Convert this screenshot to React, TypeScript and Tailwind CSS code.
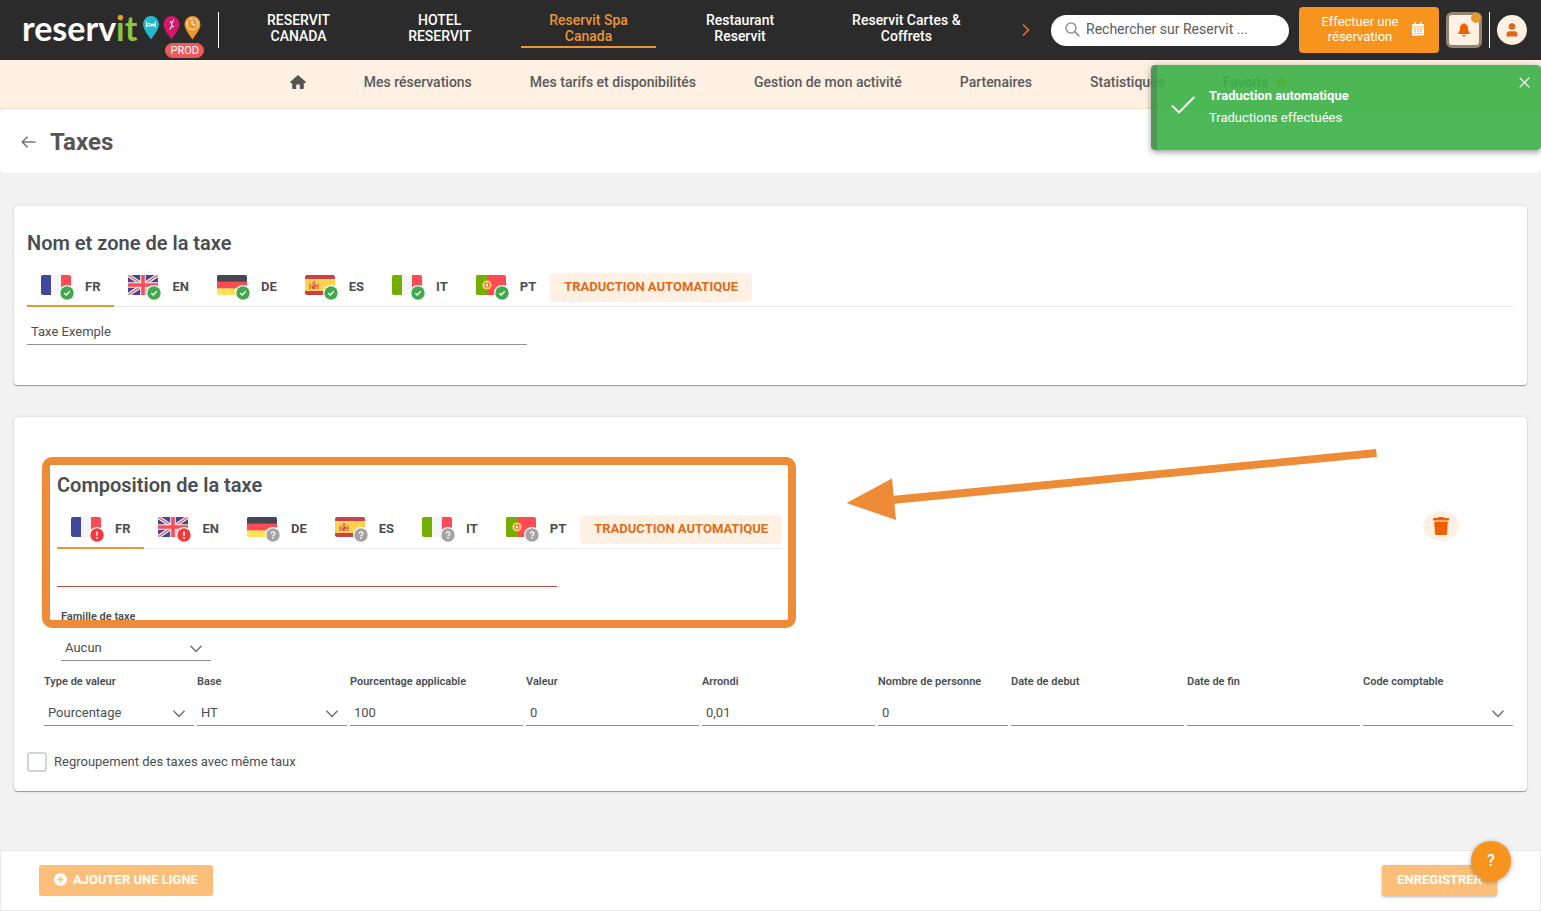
import React, { useState } from "react";

type Status = "ok" | "error" | "unknown";
type Lang = "FR" | "EN" | "DE" | "ES" | "IT" | "PT";

const LANGS: Lang[] = ["FR", "EN", "DE", "ES", "IT", "PT"];

function Flag({ code, id }: { code: Lang; id: string }) {
  const clip = `flag-${id}-${code}`;
  return (
    <svg width="30" height="20" viewBox="0 0 30 20" aria-hidden="true" className="block">
      <clipPath id={clip}>
        <rect width="30" height="20" rx="2" />
      </clipPath>
      <g clipPath={`url(#${clip})`}>
        {code === "FR" && (
          <>
            <rect width="30" height="20" fill="#f5f5f5" />
            <rect width="10" height="20" fill="#41479b" />
            <rect x="20" width="10" height="20" fill="#ff4b55" />
          </>
        )}
        {code === "EN" && (
          <>
            <rect width="30" height="20" fill="#41479b" />
            <path d="M0 0L30 20M30 0L0 20" stroke="#f5f5f5" strokeWidth="3.6" />
            <path d="M0 0L15 10M30 20L15 10M30 0L15 10M0 20L15 10" stroke="#ff4b55" strokeWidth="1.3" />
            <path d="M15 0V20M0 10H30" stroke="#f5f5f5" strokeWidth="5.6" />
            <path d="M15 0V20M0 10H30" stroke="#ff4b55" strokeWidth="3.6" />
          </>
        )}
        {code === "DE" && (
          <>
            <rect width="30" height="20" fill="#ffe15a" />
            <rect width="30" height="13.3" fill="#ff4b55" />
            <rect width="30" height="6.6" fill="#464655" />
          </>
        )}
        {code === "ES" && (
          <>
            <rect width="30" height="20" fill="#c8414b" />
            <rect y="4" width="30" height="12" fill="#ffd250" />
            <path d="M5 8V13.5M13 8V13.5" stroke="#d0605a" strokeWidth="0.9" />
            <path d="M6.6 9.4h4.8v2.8a2.4 1.8 0 0 1-4.8 0z" fill="#c8414b" />
            <path d="M7.2 10.2h1.4v1.2H7.2zM9.4 11.8h1.4v1H9.4z" fill="#ffd250" />
            <path d="M7.2 8.6L7.6 7L9 6.200L10.400 7L10.800 8.600z" fill="#d06a4a" />
            <path d="M4 11.200h1.800M12.200 11.200h1.800M4.200 13.800h1.400M12.400 13.800h1.400" stroke="#c8414b" strokeWidth="0.8" />
          </>
        )}
        {code === "IT" && (
          <>
            <rect width="30" height="20" fill="#f5f5f5" />
            <rect width="10" height="20" fill="#73af00" />
            <rect x="20" width="10" height="20" fill="#ff4b55" />
          </>
        )}
        {code === "PT" && (
          <>
            <rect width="30" height="20" fill="#ff4b55" />
            <rect width="11" height="20" fill="#73af00" />
            <circle cx="11" cy="10" r="4.6" fill="#ffe15a" />
            <circle cx="11" cy="10" r="3.4" fill="none" stroke="#e9b04a" strokeWidth="0.7" />
            <path d="M8.8 7.8h4.4v2.600a2.200 2.200 0 0 1-4.400 0z" fill="#ff4b55" />
            <path d="M9.800 8.800h2.400v1.600a1.200 1.200 0 0 1-2.400 0z" fill="#f5f5f5" />
          </>
        )}
      </g>
    </svg>
  );
}

function StatusBadge({ status }: { status: Status }) {
  const fill = status === "ok" ? "#3fa94b" : status === "error" ? "#f43a3a" : "#a3a3a3";
  return (
    <svg width="16" height="16" viewBox="0 0 16 16" aria-hidden="true" className="absolute -right-1 -bottom-1.5">
      <circle cx="8" cy="8" r="8" fill="#fff" />
      <circle cx="8" cy="8" r="6.7" fill={fill} />
      {status === "ok" && <path d="M5.3 8.2L7.2 10L10.8 6.3" fill="none" stroke="#fff" strokeWidth="1.4" />}
      {status === "error" && <path d="M8 4.4V8.8M8 10.1V11.7" stroke="#fff" strokeWidth="1.5" />}
      {status === "unknown" && (
        <>
          <path d="M6.2 6.6a1.8 1.7 0 1 1 2.6 1.5q-.8.4-.8 1.3" fill="none" stroke="#fff" strokeWidth="1.3" />
          <path d="M8 10.3V11.7" stroke="#fff" strokeWidth="1.4" />
        </>
      )}
    </svg>
  );
}

function LanguageTabs({ id, status }: { id: string; status: Record<Lang, Status> }) {
  const [active, setActive] = useState<Lang>("FR");
  return (
    <div className="flex border-b border-[#e9e9e9]">
      <div role="tablist" className="flex">
        {LANGS.map((l) => (
          <button
            key={l}
            type="button"
            role="tab"
            aria-selected={l === active}
            onClick={() => setActive(l)}
            className={`-mb-px flex h-10 items-center gap-3.5 border-b-2 px-3.5 pt-0.5 text-[13px] font-bold ${
              l === active ? "border-[#e8963a]" : "border-transparent"
            }`}
          >
            <span className="relative mb-1">
              <Flag code={l} id={id} />
              <StatusBadge status={status[l]} />
            </span>
            {l}
          </button>
        ))}
      </div>
      <button
        type="button"
        className="mt-1.5 h-[29px] rounded-[4px] bg-[#fef0e2] px-3.5 pb-0.5 text-[13px] font-bold text-[#de6b1a]"
      >
        TRADUCTION AUTOMATIQUE
      </button>
    </div>
  );
}

function SelectField({ id, label, options }: { id: string; label: string; options: string[] }) {
  return (
    <div className="flex min-w-0 flex-col">
      <label htmlFor={id} className="h-4 text-[11px] leading-4 font-semibold whitespace-nowrap">
        {label}
      </label>
      <div className="relative mt-[11px]">
        <select
          id={id}
          className="block h-[25px] w-full appearance-none border-b border-[#8f9193] bg-transparent pr-7 pl-1 text-[13px] outline-none"
        >
          {options.map((o) => (
            <option key={o}>{o}</option>
          ))}
        </select>
        <svg
          width="14"
          height="10"
          viewBox="0 0 14 10"
          aria-hidden="true"
          className="pointer-events-none absolute top-2 right-2"
        >
          <path d="M1.5 1.8L7 7.4L12.5 1.8" fill="none" stroke="#6a6e72" strokeWidth="1.4" />
        </svg>
      </div>
    </div>
  );
}

function TextField({ id, label, value }: { id: string; label: string; value?: string }) {
  return (
    <div className="flex min-w-0 flex-col">
      <label htmlFor={id} className="h-4 text-[11px] leading-4 font-semibold whitespace-nowrap">
        {label}
      </label>
      <input
        id={id}
        defaultValue={value}
        className="mt-[11px] block h-[25px] w-full border-b border-[#8f9193] bg-transparent px-1 pb-0.5 text-[13px] outline-none"
      />
    </div>
  );
}

function Logo() {
  return (
    <a href="#" aria-label="Reservit" className="relative flex w-[180px] shrink-0 items-center justify-between pb-1">
      <span className="font-[Lato,sans-serif] text-[34px] leading-9 font-bold text-white">
        reserv
        <span className="relative text-[#8cc63f]">
          it
          <span className="absolute top-2 left-0.5 h-[5px] w-[5px] rounded-full bg-[#f0962a]" />
        </span>
      </span>
      <svg width="60" height="26" viewBox="0 0 60 26" aria-hidden="true" className="shrink-0">
        <path d="M9 1a8 8 0 0 1 8 8.3C17 14 12 20 9 24.5C6 20 1 14 1 9.300A8 8 0 0 1 9 1z" fill="#25b9cf" />
        <path d="M4.600 6.500V12.500M13.400 6.500V12.500M4.600 10.700H13.400M6 8.200L9.500 9.400H12.500" stroke="#fff" strokeWidth="1.1" fill="none" />
        <path d="M29.500 1a8 8 0 0 1 8 8.300C37.500 14 32.500 20 29.500 24.500C26.500 20 21.500 14 21.500 9.300A8 8 0 0 1 29.500 1z" fill="#d6186c" />
        <path d="M32 4.500L29.800 8L28 6.500M29.800 8V11L27.800 14.500M29.800 11L32 12" stroke="#fff" strokeWidth="1.100" fill="none" />
        <path d="M50.500 1a8 8 0 0 1 8 8.300C58.500 14 53.500 20 50.500 24.500C47.500 20 42.500 14 42.500 9.300A8 8 0 0 1 50.500 1z" fill="#f0962a" />
        <circle cx="50.500" cy="9" r="5.600" fill="none" stroke="#fff" strokeWidth="1" strokeDasharray="20 1 1.500 1 1.500 1 1.500 1" />
        <path d="M50 5.500V9.300L53.500 10.300" stroke="#fff" strokeWidth="1" fill="none" />
      </svg>
      <span className="absolute top-[33px] -right-0.5 flex h-[15px] items-center rounded-full bg-[#ee5a5a] px-[5px] text-[11px] leading-none text-white">
        PROD
      </span>
    </a>
  );
}

const SITES: [string, string][] = [
  ["RESERVIT", "CANADA"],
  ["HOTEL", "RESERVIT"],
  ["Reservit Spa", "Canada"],
  ["Restaurant", "Reservit"],
  ["Reservit Cartes &", "Coffrets"],
];

function Header() {
  return (
    <header className="flex h-[60px] shrink-0 items-center bg-[#2b2b2b] pr-3.5 pl-[22px] text-white">
      <Logo />
      <div className="ml-4 h-9 w-px shrink-0 bg-white" />
      <nav className="ml-5 flex gap-[22px]">
        {SITES.map(([a, b], i) => (
          <a
            key={a}
            href="#"
            className={`flex h-9 flex-col items-center border-b-2 px-7 text-sm leading-4 font-medium whitespace-nowrap ${
              i === 2 ? "border-[#e8963a] text-[#e8963a]" : "border-transparent"
            }`}
          >
            <span>{a}</span>
            <span>{b}</span>
          </a>
        ))}
      </nav>
      <div className="ml-auto flex shrink-0 items-center">
        <button type="button" aria-label="Suivant" className="mr-5">
          <svg width="10" height="14" viewBox="0 0 10 14" className="block">
            <path d="M2 1.500L7.500 7L2 12.500" fill="none" stroke="#e0701e" strokeWidth="1.700" />
          </svg>
        </button>
        <label className="flex h-[31px] w-[238px] items-center gap-1.5 rounded-full bg-white pb-0.5 pl-3.5">
          <svg width="15" height="15" viewBox="0 0 14 14" aria-hidden="true" className="shrink-0">
            <circle cx="5.600" cy="5.600" r="4.700" fill="none" stroke="#9a9a9a" strokeWidth="1.500" />
            <path d="M9 9L13.300 13.300" stroke="#9a9a9a" strokeWidth="1.700" />
          </svg>
          <input
            aria-label="Rechercher sur Reservit"
            placeholder="Rechercher sur Reservit ..."
            className="w-full min-w-0 bg-transparent pr-3 text-sm text-[#4a4a4a] outline-none placeholder:text-[#5c5c5c]"
          />
        </label>
        <button
          type="button"
          className="ml-2.5 flex h-[46px] w-[140px] items-center justify-center gap-3 rounded-[4px] bg-[#f7941e] pb-0.5 pl-1.5 text-[13px] leading-[15px]"
        >
          <span className="w-20">Effectuer une réservation</span>
          <svg width="12" height="14" viewBox="0 0 12 14" aria-hidden="true">
            <path d="M1 2H11Q12 2 12 3V12.500Q12 13.500 11 13.500H1Q0 13.500 0 12.500V3Q0 2 1 2zM2.500 .3H4V2H2.500zM8 .3H9.500V2H8z" fill="#fff" />
            <path d="M0 4.700H12" stroke="#f7941e" strokeWidth="0.600" />
            <path d="M2 7H4M5 7H7M8 7H10M2 9.200H4M5 9.200H7M8 9.200H10M2 11.400H4M5 11.400H7M8 11.400H10" stroke="#f7941e" strokeWidth="0.900" />
          </svg>
        </button>
        <button
          type="button"
          aria-label="Notifications"
          className="relative ml-[7px] flex h-9 w-9 items-center justify-center rounded-[6px] border-3 border-[#958570] bg-[#fef0e2]"
        >
          <svg width="12" height="14" viewBox="0 0 12 14" aria-hidden="true">
            <path d="M6 0C6.500 0 6.900.4 6.900 1C9 1.500 10 3 10 5C10 8 11 9 11.800 9.800Q12 11 11.200 11H.8Q0 11 .2 9.800C1 9 2 8 2 5C2 3 3 1.500 5.100 1C5.100.4 5.500 0 6 0zM4.300 11.900H7.700Q7.400 13.500 6 13.500T4.300 11.900z" fill="#ee6000" />
          </svg>
          <span className="absolute -top-0.5 -right-0.5 h-2.5 w-2.5 rounded-full bg-[#ea9a2c]" />
        </button>
        <div className="mx-[7px] h-9 w-px bg-white" />
        <button
          type="button"
          aria-label="Compte"
          className="flex h-[30px] w-[30px] items-center justify-center rounded-full bg-[#fef0e2]"
        >
          <svg width="12" height="14" viewBox="0 0 12 14" aria-hidden="true">
            <circle cx="6" cy="3.600" r="3.300" fill="#e2661a" />
            <path d="M0.500 13.500V11.500Q.5 8.300 3.500 8.300H8.500Q11.500 8.300 11.500 11.500V13.500z" fill="#e2661a" />
          </svg>
        </button>
      </div>
    </header>
  );
}

const MENU = [
  "Mes réservations",
  "Mes tarifs et disponibilités",
  "Gestion de mon activité",
  "Partenaires",
  "Statistiques",
];

function SubNav() {
  return (
    <nav className="flex h-[49px] shrink-0 items-center justify-center gap-[58px] border-b border-[#f3e2c4] bg-[#fef0e2] pb-1 pl-[38px] text-sm font-medium whitespace-nowrap text-[#5a5a5a]">
      <a href="#" aria-label="Accueil">
        <svg width="16" height="14" viewBox="0 0 16 14" className="block">
          <path d="M8 0L16 7L15 8.200H13.800V13Q13.800 14 12.800 14H9.800V9.500H6.200V14H3.200Q2.200 14 2.200 13V8.200H1L0 7z" fill="#555" />
        </svg>
      </a>
      {MENU.map((m) => (
        <a key={m} href="#">
          {m}
        </a>
      ))}
      <a href="#" className="flex items-center gap-1.5">
        Favoris
        <svg width="15" height="14" viewBox="0 0 15 14" aria-hidden="true">
          <path d="M7.500 0L9.700 4.600L14.800 5.200L11 8.700L12 13.700L7.500 11.200L3 13.700L4 8.700L.2 5.200L5.300 4.600z" fill="#ffc400" />
        </svg>
      </a>
    </nav>
  );
}

function Toast() {
  return (
    <div
      role="status"
      className="absolute top-[65px] right-0 flex h-[85px] w-[390px] items-center gap-3.5 rounded-[4px] border-l-6 border-[#43944c]/95 bg-[#39b045]/90 bg-clip-padding pb-1.5 pl-3.5 text-white shadow-[0_2px_6px_rgba(0,0,0,0.4)]"
    >
      <svg width="24" height="18" viewBox="0 0 24 18" aria-hidden="true">
        <path d="M.8 9.500L8 16.500L23.300 1" fill="none" stroke="#fff" strokeWidth="1.900" />
      </svg>
      <div className="pt-1 text-[13px] leading-[22px]">
        <p className="font-bold">Traduction automatique</p>
        <p>Traductions effectuées</p>
      </div>
      <button type="button" aria-label="Fermer" className="absolute top-3 right-[11px]">
        <svg width="11" height="11" viewBox="0 0 11 11" className="block">
          <path d="M.6.6L10.400 10.400M10.400.6L.6 10.400" stroke="#fff" strokeWidth="1.300" />
        </svg>
      </button>
    </div>
  );
}

const CARD =
  "relative mx-3.5 rounded-[4px] bg-white px-[13px] shadow-[0_1px_1px_rgba(0,0,0,0.35),0_0_3px_rgba(0,0,0,0.12)]";

const NAME_STATUS: Record<Lang, Status> = { FR: "ok", EN: "ok", DE: "ok", ES: "ok", IT: "ok", PT: "ok" };
const PART_STATUS: Record<Lang, Status> = {
  FR: "error",
  EN: "error",
  DE: "unknown",
  ES: "unknown",
  IT: "unknown",
  PT: "unknown",
};

export default function App() {
  return (
    <div className="relative flex min-h-screen flex-col bg-[#f2f2f2] font-[Roboto,sans-serif] text-[#4a4e52]">
      <Header />
      <SubNav />
      <div className="flex h-16 shrink-0 items-center gap-3.5 rounded-[6px] bg-white pt-px pl-[21px] text-[#555]">
        <a href="#" aria-label="Retour">
          <svg width="15" height="12" viewBox="0 0 15 12" className="block">
            <path d="M6.500.7L1.200 6L6.500 11.300M1.200 6H14.500" fill="none" stroke="#777" strokeWidth="1.600" />
          </svg>
        </a>
        <h1 className="text-2xl font-bold">Taxes</h1>
      </div>

      <main className="flex flex-col gap-8 pt-[33px] pb-14">
        <section className={`${CARD} h-[179px] pt-[25px]`}>
          <h2 className="text-xl leading-6 font-semibold">Nom et zone de la taxe</h2>
          <div className="mt-3">
            <LanguageTabs id="name" status={NAME_STATUS} />
          </div>
          <input
            aria-label="Nom de la taxe"
            defaultValue="Taxe Exemple"
            className="mt-[11px] block h-[27px] w-[500px] border-b border-[#8f9193] px-1 text-[13px] outline-none"
          />
        </section>

        <section className={`${CARD} pt-14 pb-[19px]`}>
          <div className="flex items-center justify-between pr-[55px] pl-[30px]">
            <div>
              <h2 className="text-xl leading-6 font-semibold">Composition de la taxe</h2>
              <div className="mt-3">
                <LanguageTabs id="part" status={PART_STATUS} />
              </div>
              <input
                aria-label="Nom de la composition"
                className="mt-[11px] block h-[27px] w-[500px] border-b border-[#bb4a40] px-1 text-[13px] outline-none"
              />
            </div>
            <button
              type="button"
              aria-label="Supprimer"
              className="mb-2 flex h-[30px] w-9 items-center justify-center rounded-[50%] bg-[#fef0e2]"
            >
              <svg width="16" height="18" viewBox="0 0 16 18" aria-hidden="true">
                <path d="M5.500 0H10.500L11 1H15.500Q16 1 16 1.600V3.500H0V1.600Q0 1 .5 1H5zM1.200 4.600H14.800L14 16.500Q13.900 18 12.500 18H3.500Q2.100 18 2 16.500z" fill="#ee6000" />
              </svg>
            </button>
          </div>
          <div className="mt-[22px] ml-[34px] w-[150px]">
            <SelectField id="family" label="Famille de taxe" options={["Aucun"]} />
          </div>
          <div className="mt-[13px] grid grid-cols-[150fr_150fr_173fr_173fr_173fr_130fr_173fr_173fr_150fr] gap-[3px] pr-px pl-[17px]">
            <SelectField id="type" label="Type de valeur" options={["Pourcentage"]} />
            <SelectField id="base" label="Base" options={["HT"]} />
            <TextField id="percent" label="Pourcentage applicable" value="100" />
            <TextField id="value" label="Valeur" value="0" />
            <TextField id="round" label="Arrondi" value="0,01" />
            <TextField id="people" label="Nombre de personne" value="0" />
            <TextField id="start" label="Date de debut" />
            <TextField id="end" label="Date de fin" />
            <SelectField id="account" label="Code comptable" options={[""]} />
          </div>
          <label className="mt-[26px] flex w-fit items-center gap-[7px] text-[13px]">
            <input
              type="checkbox"
              className="h-5 w-5 appearance-none rounded-[3px] border-2 border-[#ced4da] bg-white checked:bg-[#f7941e]"
            />
            Regroupement des taxes avec même taux
          </label>

          <div className="pointer-events-none absolute top-10 left-7 h-[171px] w-[754px] rounded-[10px] border-8 border-[#ed8b36]" />
          <svg
            width="532"
            height="72"
            viewBox="0 0 532 72"
            aria-hidden="true"
            className="pointer-events-none absolute top-8 left-[832px]"
          >
            <path d="M46 51L530.500 4" stroke="#ed8b36" strokeWidth="7.800" />
            <path d="M.5 54L46 29.500L50 71z" fill="#ed8b36" />
          </svg>
        </section>
      </main>

      <footer className="relative mt-auto flex h-[61px] shrink-0 items-center justify-between border border-[#e9e9e9] bg-white pr-[43px] pl-[38px] text-[13px] font-bold text-white">
        <button type="button" className="flex h-[31px] items-center gap-1.5 rounded-[3px] bg-[#fbbf79] px-[15px] pb-0.5">
          <svg width="13" height="13" viewBox="0 0 13 13" aria-hidden="true">
            <circle cx="6.500" cy="6.500" r="6.500" fill="#fff" />
            <path d="M6.500 3.500V9.500M3.500 6.500H9.500" stroke="#fbbf79" strokeWidth="1.500" />
          </svg>
          AJOUTER UNE LIGNE
        </button>
        <button
          type="button"
          className="h-[31px] rounded-[3px] bg-[#fbbf79] px-[15px] pb-0.5 shadow-[0_1px_3px_rgba(0,0,0,0.3)]"
        >
          ENREGISTRER
        </button>
        <button
          type="button"
          aria-label="Aide"
          className="absolute -top-2.5 right-[29px] flex h-10 w-10 items-center justify-center rounded-full bg-[#f7941e] text-base font-medium shadow-[0_1px_5px_rgba(0,0,0,0.35)]"
        >
          ?
        </button>
      </footer>
      <Toast />
    </div>
  );
}
